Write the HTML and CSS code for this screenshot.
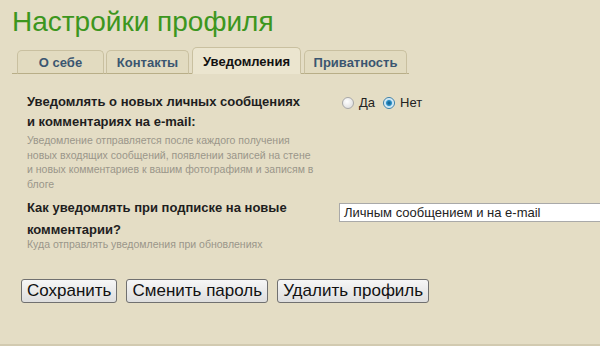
FILE: index.html
```html
<!doctype html>
<html>
<head>
	<meta charset="utf-8">
	<title>Настройки профиля</title>
	<link rel="stylesheet" href="styles.css">
</head>
<body>
	<div class="page">
		<h1 class="title">Настройки профиля</h1>

		<ul class="tabs">
			<li class="tab">О себе</li>
			<li class="tab">Контакты</li>
			<li class="tab active">Уведомления</li>
			<li class="tab">Приватность</li>
		</ul>

		<form class="settings">
			<div class="row first">
				<div class="label">
					<div class="name">Уведомлять о новых личных сообщениях и комментариях на e-mail:</div>
					<div class="hint">Уведомление отправляется после каждого получения новых входящих сообщений, появлении записей на стене и новых комментариев к вашим фотографиям и записям в блоге</div>
				</div>
				<div class="control radios">
					<label class="radio"><span class="dot"></span>Да</label>
					<label class="radio"><span class="dot on"></span>Нет</label>
				</div>
			</div>

			<div class="row second">
				<div class="label">
					<div class="name">Как уведомлять при подписке на новые комментарии?</div>
					<div class="hint">Куда отправлять уведомления при обновлениях</div>
				</div>
				<div class="control">
					<div class="select">Личным сообщением и на e-mail</div>
				</div>
			</div>

			<div class="buttons">
				<button type="button" class="btn">Сохранить</button>
				<button type="button" class="btn">Сменить пароль</button>
				<button type="button" class="btn">Удалить профиль</button>
			</div>
		</form>
	</div>
</body>
</html>
```

FILE: styles.css
```css
html,
body {
	margin: 0;
	height: 100%;
}

body {
	background: #e4ddc5;
	font-family: "Liberation Sans", Arial, sans-serif;
	color: #222;
	overflow: hidden;
}

.page {
	box-sizing: border-box;
	height: 346px;
	padding: 5px 0 0 12px;
	border-bottom: 2px solid #d2cab0;
}

.title {
	margin: 0;
	font-size: 28px;
	font-weight: normal;
	line-height: 34px;
	color: #3c961e;
}

/* tabs */
.tabs {
	display: flex;
	align-items: flex-end;
	gap: 2px;
	width: 392px;
	height: 25px;
	margin: 9px 0 0;
	padding: 0 0 0 5px;
	list-style: none;
	border-bottom: 1px solid #b8ae88;
}

.tab {
	box-sizing: border-box;
	height: 24px;
	margin-bottom: -1px;
	background: #e2dbc0;
	border: 1px solid #c9c0a0;
	border-bottom-color: #b8ae88;
	border-radius: 5px 5px 0 0;
	font-size: 13px;
	font-weight: bold;
	line-height: 23px;
	text-align: center;
	color: #3b5670;
}

.tab:nth-child(1) { width: 87px; }
.tab:nth-child(2) { width: 83px; }
.tab:nth-child(3) { width: 109px; margin-left: 1px; }
.tab:nth-child(4) { width: 103px; margin-left: 1px; }

.tab.active {
	height: 27px;
	padding-top: 2px;
	background: #ebe5cf;
	border-bottom-color: #ebe5cf;
	color: #111;
}

/* form */
.settings {
	padding: 18px 0 0 15px;
}

.row {
	display: grid;
	grid-template-columns: 311px 1fr;
	align-items: start;
}

.name {
	width: 278px;
	font-size: 13px;
	font-weight: bold;
	line-height: 20px;
	color: #1e1e1e;
}

.hint {
	width: 290px;
	margin-top: 1px;
	font-size: 10.5px;
	line-height: 14.5px;
	color: #9a968a;
}

.second {
	margin-top: 6px;
}

.second .name {
	width: 275px;
	line-height: 22px;
}

.second .hint {
	margin-top: -4px;
}

.radios {
	display: flex;
	align-items: center;
	gap: 8px;
	padding: 3px 0 0 4px;
}

.radio {
	display: flex;
	align-items: center;
	gap: 5px;
	font-size: 13px;
	line-height: 16px;
	color: #222;
}

.dot {
	box-sizing: border-box;
	width: 12px;
	height: 12px;
	border: 1px solid #a8a8a8;
	border-radius: 50%;
	background: radial-gradient(circle at 40% 35%, #fff, #d8d8d8);
}

.dot.on {
	border-color: #3a7fa8;
	background: radial-gradient(circle, #0f5a88 0, #2b8fc6 2.5px, #bfe0f2 3.5px, #e8f4fb 5px);
}

.second .control {
	padding: 6px 0 0 1px;
}

.select {
	box-sizing: border-box;
	width: 280px;
	height: 19px;
	padding: 0 4px;
	background: #fff;
	border: 1px solid #a9a9a9;
	font-size: 13px;
	line-height: 17px;
	color: #222;
	white-space: nowrap;
}

/* buttons */
.buttons {
	display: flex;
	gap: 9px;
	margin: 27px 0 0 -6px;
}

.btn {
	height: 24px;
	padding: 0 5px;
	background: linear-gradient(#f6f6f6, #dedede);
	border: 1px solid #707070;
	border-radius: 3px;
	font-family: "Liberation Sans", Arial, sans-serif;
	font-size: 17px;
	line-height: 22px;
	color: #111;
}
```
